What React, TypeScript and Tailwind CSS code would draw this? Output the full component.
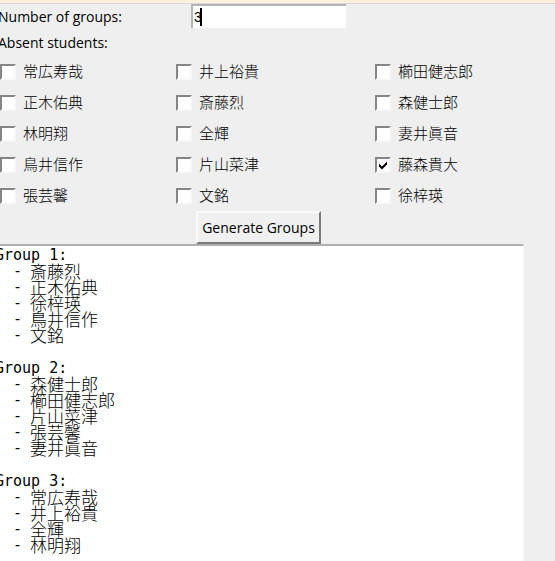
import { useState } from "react";

const students = [
  "常広寿哉", "井上裕貴", "櫛田健志郎",
  "正木佑典", "斎藤烈", "森健士郎",
  "林明翔", "全輝", "妻井眞音",
  "鳥井信作", "片山菜津", "藤森貴大",
  "張芸馨", "文銘", "徐梓瑛",
];

const groups = [
  ["斎藤烈", "正木佑典", "徐梓瑛", "鳥井信作", "文銘"],
  ["森健士郎", "櫛田健志郎", "片山菜津", "張芸馨", "妻井眞音"],
  ["常広寿哉", "井上裕貴", "全輝", "林明翔"],
];

function Student({ name, initial }: { name: string; initial: boolean }) {
  const [absent, setAbsent] = useState(initial);
  return (
    <label className="flex h-[31px] items-center gap-[7px] text-[15px] font-light">
      <span className="relative flex">
        <input
          type="checkbox"
          checked={absent}
          onChange={(e) => setAbsent(e.target.checked)}
          className="size-4 appearance-none border-2 border-t-[#858585] border-l-[#858585] border-r-[#f8f8f8] border-b-[#f8f8f8] bg-white"
        />
        {absent && (
          <svg viewBox="0 0 16 16" className="pointer-events-none absolute inset-0 size-4">
            <path d="M4 6.5 L7 9.5 L12 4.5 V7.5 L7 12.5 L4 9.5 Z" fill="#000" />
          </svg>
        )}
      </span>
      {name}
    </label>
  );
}

export default function App() {
  const [count, setCount] = useState("3");
  return (
    <div className="flex min-h-screen flex-col overflow-hidden bg-[#efefef] font-['Open_Sans','Noto_Sans_CJK_JP',sans-serif] text-sm text-black">
      <div className="h-1 border-b border-[#d8d8d8] bg-[#fbf1e0]" />
      <main className="mr-[31px] -ml-[7px] flex grow flex-col">
        <div className="grid grid-cols-[182px_auto] pl-1">
          <label htmlFor="count" className="flex h-[26px] items-center pl-px">
            Number of groups:
          </label>
          <div className="relative ml-3 h-6 w-[155px]">
            <input
              id="count"
              value={count}
              onChange={(e) => setCount(e.target.value)}
              className="h-6 w-full border-t-2 border-l-2 border-[#b4b4b4] bg-white px-px font-['Liberation_Sans',sans-serif] text-sm outline-none"
            />
            <span className="absolute top-1 left-[9px] h-[18px] w-0.5 bg-black" />
          </div>
        </div>
        <fieldset>
          <legend className="flex h-[26px] items-center pl-[5px]">Absent students:</legend>
          <div className="grid grid-cols-[176px_199px_auto] pl-[7px]">
            {students.map((name) => (
              <Student key={name} name={name} initial={name === "藤森貴大"} />
            ))}
          </div>
        </fieldset>
        <div className="flex justify-center">
          <button
            type="button"
            className="h-[33px] border-2 border-t-[#fafafa] border-l-[#fafafa] border-r-[#7a7a7a] border-b-[#7a7a7a] bg-[#f0f0f0] px-1"
          >
            Generate Groups
          </button>
        </div>
        <output className="flex grow flex-col gap-[17px] border-t-2 border-r border-t-[#b0b0b0] border-r-[#f8f8f8] bg-white pt-px pl-0.5 font-['DejaVu_Sans_Mono','Noto_Sans_CJK_JP',monospace] text-[15px] leading-4">
          {groups.map((members, i) => (
            <section key={i}>
              <h2>Group {i + 1}:</h2>
              <ul className="pl-[18px]">
                {members.map((name) => (
                  <li key={name} className="flex h-4 items-center gap-2">
                    <span>-</span>
                    <span className="font-['Noto_Sans_CJK_JP',sans-serif] text-[17px] leading-4 font-light">{name}</span>
                  </li>
                ))}
              </ul>
            </section>
          ))}
        </output>
      </main>
    </div>
  );
}
